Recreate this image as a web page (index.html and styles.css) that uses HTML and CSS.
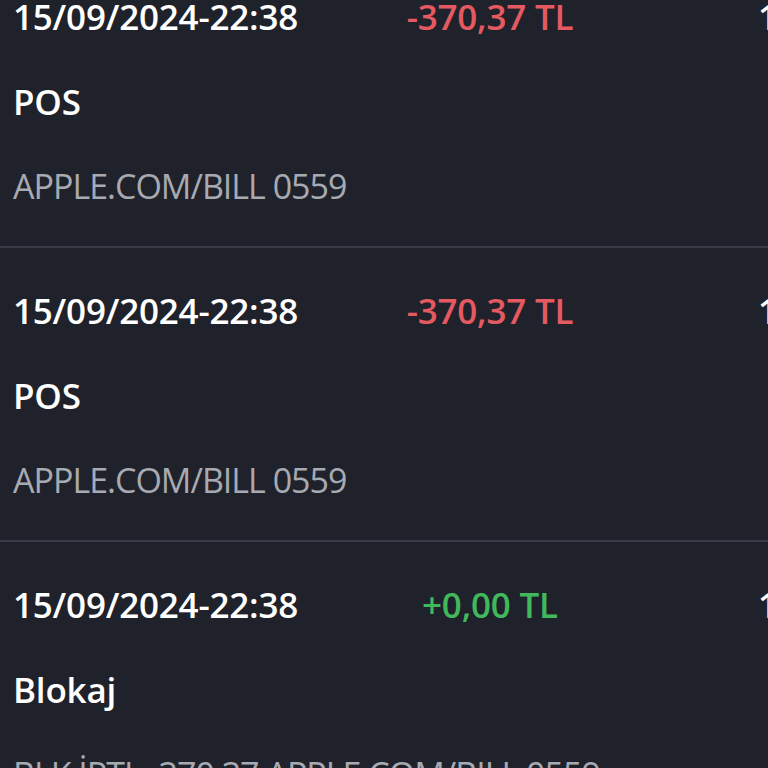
FILE: index.html
```html
<!DOCTYPE html>
<html lang="tr">
<head>
<meta charset="utf-8">
<link rel="stylesheet" href="styles.css">
</head>
<body>
<div class="list">
  <div class="row">
    <div class="date">15/09/2024-22:38</div>
    <div class="amount neg">-370,37 TL</div>
    <div class="bal">1.250,00 TL</div>
    <div class="title">POS</div>
    <div class="desc">APPLE.COM/BILL 0559</div>
  </div>
  <div class="row">
    <div class="date">15/09/2024-22:38</div>
    <div class="amount neg">-370,37 TL</div>
    <div class="bal">1.620,37 TL</div>
    <div class="title">POS</div>
    <div class="desc">APPLE.COM/BILL 0559</div>
  </div>
  <div class="row">
    <div class="date">15/09/2024-22:38</div>
    <div class="amount pos">+0,00 TL</div>
    <div class="bal">1.990,74 TL</div>
    <div class="title">Blokaj</div>
    <div class="desc">BLK İPTL -370,37 APPLE.COM/BILL 0559</div>
  </div>
</div>
</body>
</html>
```
FILE: styles.css
```css
html, body {
  margin: 0;
  padding: 0;
  background: #1f222b;
  width: 768px;
  height: 768px;
  overflow: hidden;
}
body {
  font-family: "Open Sans", "Noto Sans", sans-serif;
  color: #ffffff;
}
.list {
  margin-top: -46px;
}
.row {
  display: grid;
  grid-template-columns: 354px 246px 1fr;
  grid-auto-rows: 85px;
  padding: 20px 0 17px 13px;
  border-bottom: 2px solid #393c46;
  font-size: 35px;
  line-height: 85px;
  white-space: nowrap;
  letter-spacing: -0.2px;
}
.date {
  font-weight: 560;
}
.amount {
  text-align: center;
  font-weight: 560;
}
.neg { color: #e55a60; }
.pos { color: #41b85b; }
.bal {
  padding-left: 145px;
  font-weight: 560;
  overflow: hidden;
}
.title {
  grid-column: 1 / 4;
  font-weight: 560;
}
.desc {
  grid-column: 1 / 4;
  color: #a8aab2;
  font-size: 34px;
  font-weight: 400;
  letter-spacing: -1px;
}
```
